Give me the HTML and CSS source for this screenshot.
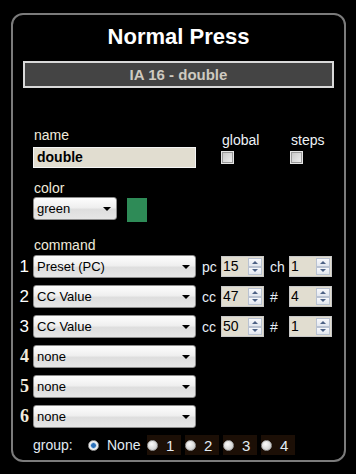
FILE: index.html
```html
<!DOCTYPE html>
<html lang="en">

<head>
  <meta charset="UTF-8">
  <title>Normal Press</title>
  <link rel="stylesheet" href="styles.css">
</head>

<body>
<div class="panel">
  <h1 class="title">Normal Press</h1>
  <div class="bar">IA 16 - double</div>

  <div class="top">
    <div class="name-col">
      <div class="lbl">name</div>
      <div class="text-input">double</div>
      <div class="lbl lbl-color">color</div>
      <div class="color-line">
        <div class="sel sel-small">green<span class="arrow"></span></div>
        <div class="swatch"></div>
      </div>
    </div>
    <div class="check-col global">
      <div class="lbl">global</div>
      <span class="check"></span>
    </div>
    <div class="check-col">
      <div class="lbl">steps</div>
      <span class="check"></span>
    </div>
  </div>

  <div class="lbl lbl-cmd">command</div>

  <div class="row">
    <span class="num">1</span>
    <div class="sel">Preset (PC)<span class="arrow"></span></div>
    <span class="plbl">pc</span>
    <div class="spin"><span class="val">15</span><span class="btns"><i class="up"></i><i class="dn"></i></span></div>
    <span class="plbl">ch</span>
    <div class="spin"><span class="val">1</span><span class="btns"><i class="up"></i><i class="dn"></i></span></div>
  </div>
  <div class="row">
    <span class="num">2</span>
    <div class="sel">CC Value<span class="arrow"></span></div>
    <span class="plbl">cc</span>
    <div class="spin"><span class="val">47</span><span class="btns"><i class="up"></i><i class="dn"></i></span></div>
    <span class="plbl">#</span>
    <div class="spin"><span class="val">4</span><span class="btns"><i class="up"></i><i class="dn"></i></span></div>
  </div>
  <div class="row">
    <span class="num">3</span>
    <div class="sel">CC Value<span class="arrow"></span></div>
    <span class="plbl">cc</span>
    <div class="spin"><span class="val">50</span><span class="btns"><i class="up"></i><i class="dn"></i></span></div>
    <span class="plbl">#</span>
    <div class="spin"><span class="val">1</span><span class="btns"><i class="up"></i><i class="dn"></i></span></div>
  </div>
  <div class="row">
    <span class="num serif">4</span>
    <div class="sel">none<span class="arrow"></span></div>
  </div>
  <div class="row">
    <span class="num serif">5</span>
    <div class="sel">none<span class="arrow"></span></div>
  </div>
  <div class="row">
    <span class="num serif">6</span>
    <div class="sel">none<span class="arrow"></span></div>
  </div>

  <div class="group">
    <span class="glbl">group:</span>
    <span class="opt first"><i class="radio on"></i>None</span>
    <span class="opt box"><i class="radio"></i>1</span>
    <span class="opt box"><i class="radio"></i>2</span>
    <span class="opt box"><i class="radio"></i>3</span>
    <span class="opt box"><i class="radio"></i>4</span>
  </div>
</div>
</body>

</html>
```

FILE: styles.css
```css
* {
  margin: 0;
  padding: 0;
  box-sizing: border-box;
}

body {
  background: #000;
  font-family: "Liberation Sans", Arial, sans-serif;
  font-size: 14px;
  color: #eeeae0;
}

.panel {
  margin: 13px 0 0 11px;
  width: 335px;
  border: 2px solid #7b7b7b;
  border-radius: 12px;
  padding: 9px 0 5px;
}

.title {
  font-size: 22px;
  line-height: 26px;
  font-weight: bold;
  text-align: center;
  color: #fff;
}

.bar {
  margin: 11px 10px 0;
  height: 27px;
  border: 2px solid #d9d9d9;
  background: #444;
  color: #cfcac0;
  font-size: 15px;
  font-weight: bold;
  line-height: 23px;
  text-align: center;
}

.lbl {
  line-height: 16px;
  padding-left: 1px;
  color: #f0ebdc;
}

.top {
  display: flex;
  margin: 39px 0 0 20px;
}

.name-col {
  width: 163px;
}

.text-input {
  margin-top: 4px;
  height: 21px;
  border: 1px solid #f4f4f4;
  background: #e1ddd0;
  color: #000;
  font-weight: bold;
  line-height: 19px;
  padding-left: 3px;
}

.lbl-color {
  margin-top: 12px;
}

.color-line {
  display: flex;
  margin-top: 1px;
}

.swatch {
  margin: 1px 0 0 10px;
  width: 20px;
  height: 24px;
  background: #2e8b57;
}

.check-col {
  padding-top: 5px;
}

.check-col .lbl {
  color: #eef2f6;
  padding-left: 1px;
}

.global {
  margin-left: 25px;
  width: 69px;
}

.check {
  display: block;
  margin-top: 3px;
  width: 13px;
  height: 13px;
  border: 1px solid #e6e6e6;
  background: linear-gradient(135deg, #c4c4c4, #f2f2f2);
  box-shadow: inset 0 0 0 1px #9a9a9a;
}

.lbl-cmd {
  margin: 15px 0 0 20px;
}

.row {
  display: flex;
  align-items: center;
  height: 23px;
  margin-top: 7px;
}

.lbl-cmd + .row {
  margin-top: 2px;
}

.num {
  width: 20px;
  padding-right: 4px;
  text-align: right;
  font-size: 17px;
  color: #fff;
}

.num.serif {
  font-family: "Liberation Serif", "Times New Roman", serif;
  font-weight: bold;
  font-size: 18px;
  color: #f0ebdc;
}

.sel {
  display: flex;
  align-items: center;
  width: 163px;
  height: 23px;
  border: 1px solid #8c8c8c;
  border-radius: 3px;
  background: linear-gradient(#fdfdfd, #efefef 45%, #dedede 55%, #e6e6e6);
  color: #000;
  font-size: 13px;
  padding: 0 5px 0 3px;
}

.sel-small {
  width: 84px;
}

.arrow {
  margin-left: auto;
  width: 0;
  height: 0;
  border-top: 4px solid #000;
  border-left: 4px solid transparent;
  border-right: 4px solid transparent;
}

.plbl {
  width: 25px;
  padding-left: 6px;
  font-size: 14px;
  color: #e6eef8;
}

.spin {
  display: flex;
  width: 43px;
  height: 21px;
  border: 1px solid #c8c8c8;
  background: #e1ddd0;
  color: #000;
  font-size: 14px;
}

.val {
  flex: 1;
  line-height: 19px;
  padding-left: 1px;
}

.btns {
  display: flex;
  flex-direction: column;
  width: 16px;
  padding: 1px;
}

.btns i {
  flex: 1;
  display: flex;
  align-items: center;
  justify-content: center;
  border: 1px solid #b9c2d2;
  background: linear-gradient(#f8f9fc, #e2e6ee);
}

.btns i::after {
  content: "";
  width: 0;
  height: 0;
  border-left: 3px solid transparent;
  border-right: 3px solid transparent;
}

.btns .up::after {
  border-bottom: 3px solid #4d6185;
}

.btns .dn::after {
  border-top: 3px solid #4d6185;
}

.group {
  display: flex;
  align-items: center;
  margin: 7px 0 0 20px;
  height: 20px;
  color: #e2ebf3;
}

.glbl {
  width: 55px;
}

.opt {
  display: flex;
  align-items: center;
  height: 20px;
}

.opt.first {
  width: 59px;
}

.box {
  width: 34px;
  margin-right: 4px;
  background: #1c0f06;
  font-size: 15px;
}

.radio {
  width: 11px;
  height: 11px;
  margin-right: 8px;
  border-radius: 50%;
  border: 1px solid #9a9a9a;
  background: radial-gradient(circle at 40% 35%, #fafafa, #c2c2c2);
}

.radio.on {
  background: radial-gradient(circle, #2a6fb8 0 2px, #8fb8e0 2.5px, #f4f4f4 3.5px);
}
```
